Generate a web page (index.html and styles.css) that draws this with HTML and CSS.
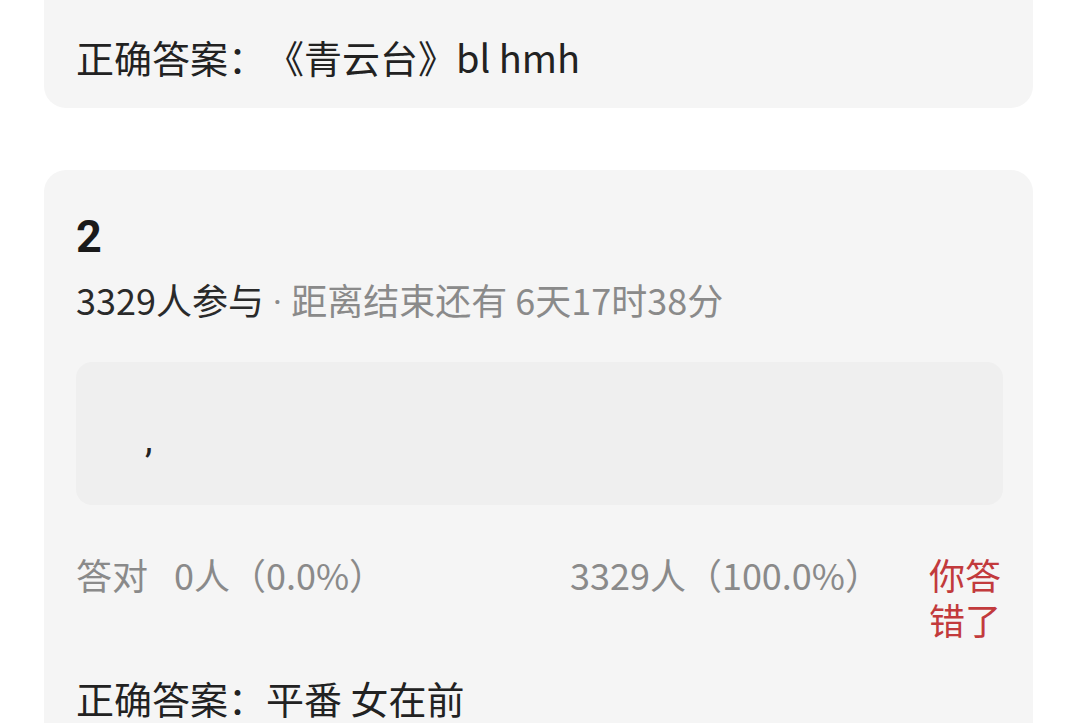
FILE: index.html
```html
<!DOCTYPE html>
<html lang="zh-CN">
<head>
<meta charset="utf-8">
<title>竞猜结果</title>
<link rel="stylesheet" href="styles.css">
</head>
<body>
<main class="feed">
  <section class="card card-prev">
    <div class="stats">
      <span class="right-count"><span class="label">答对</span>0人（0.0%）</span>
      <span class="wrong-count">3329人（100.0%）</span>
      <span class="verdict">你答<br>错了</span>
    </div>
    <p class="answer">正确答案：《青云台》bl hmh</p>
  </section>

  <section class="card">
    <h2 class="qnum">2</h2>
    <p class="meta"><span class="joined">3329人参与</span><span class="sep"> · </span>距离结束还有 6天17时38分</p>
    <div class="quote">,</div>
    <div class="stats">
      <span class="right-count"><span class="label">答对</span>0人（0.0%）</span>
      <span class="wrong-count">3329人（100.0%）</span>
      <span class="verdict">你答<br>错了</span>
    </div>
    <p class="answer">正确答案：平番 女在前</p>
  </section>
</main>
</body>
</html>
```

FILE: styles.css
```css
html, body {
  margin: 0;
  padding: 0;
  background: #ffffff;
}

body {
  font-family: "Noto Sans CJK SC", "Noto Sans", sans-serif;
  color: #222222;
  overflow: hidden;
  text-spacing-trim: space-all;
}

.feed {
  display: flex;
  flex-direction: column;
  gap: 62px;
  margin-top: -89px;
  padding: 0 43px 0 44px;
}

.card {
  background: #f5f5f5;
  border-radius: 22px;
  padding: 44px 30px 26px 32px;
}

.card-prev {
  padding-top: 0;
}

.qnum {
  margin: 0;
  font-family: Roboto, "Noto Sans", sans-serif;
  font-weight: 700;
  font-size: 45px;
  line-height: 46px;
  color: #1a1a1a;
}

.meta {
  margin: 14px 0 0;
  font-size: 36px;
  line-height: 50px;
  color: #8a8a8a;
}

.meta .joined {
  color: #2a2a2a;
}

/* the separator dot comes from Roboto so it stays narrow */
.meta .sep {
  font-family: Roboto, "Noto Sans", sans-serif;
  line-height: 1;
}

.quote {
  margin-top: 38px;
  height: 143px;
  box-sizing: border-box;
  display: flex;
  align-items: center;
  padding: 12px 69px 0;
  background: #efefef;
  border-radius: 16px;
  font-family: Roboto, "Noto Sans", sans-serif;
  font-size: 38px;
  line-height: 45px;
  color: #222222;
}

.stats {
  display: flex;
  align-items: flex-start;
  margin-top: 47px;
  font-size: 36px;
  line-height: 45px;
  color: #8a8a8a;
}

.card-prev .stats {
  margin-top: 0;
}

.right-count {
  flex: 1;
}

.label {
  margin-right: 26px;
}

.wrong-count {
  margin-right: 48px;
}

.verdict {
  width: 74px;
  color: #c23a3c;
}

.answer {
  margin: 31px 0 0;
  font-size: 38px;
  line-height: 50px;
  color: #222222;
}
```
